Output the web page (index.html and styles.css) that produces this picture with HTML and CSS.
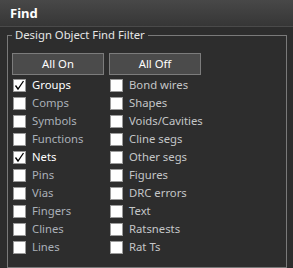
FILE: index.html
```html
<!DOCTYPE html>
<html>
<head>
<meta charset="utf-8">
<link rel="stylesheet" href="styles.css">
</head>
<body>
<div class="titlebar">Find</div>
<fieldset class="group">
  <legend class="legend">Design Object Find Filter</legend>
  <div class="buttons">
    <div class="btn">All On</div>
    <div class="btn">All Off</div>
  </div>
  <div class="grid">
    <div class="item on"><span class="box"><svg width="11" height="11" viewBox="0 0 11 11"><path d="M1.5 5.5 L4 9 L9.5 1" fill="none" stroke="#000" stroke-width="1.3"/></svg></span><span class="lbl">Groups</span></div>
    <div class="item"><span class="box"></span><span class="lbl">Comps</span></div>
    <div class="item"><span class="box"></span><span class="lbl">Symbols</span></div>
    <div class="item"><span class="box"></span><span class="lbl">Functions</span></div>
    <div class="item on"><span class="box"><svg width="11" height="11" viewBox="0 0 11 11"><path d="M1.5 5.5 L4 9 L9.5 1" fill="none" stroke="#000" stroke-width="1.3"/></svg></span><span class="lbl">Nets</span></div>
    <div class="item"><span class="box"></span><span class="lbl">Pins</span></div>
    <div class="item"><span class="box"></span><span class="lbl">Vias</span></div>
    <div class="item"><span class="box"></span><span class="lbl">Fingers</span></div>
    <div class="item"><span class="box"></span><span class="lbl">Clines</span></div>
    <div class="item"><span class="box"></span><span class="lbl">Lines</span></div>
    <div class="item r"><span class="box"></span><span class="lbl">Bond wires</span></div>
    <div class="item r"><span class="box"></span><span class="lbl">Shapes</span></div>
    <div class="item r"><span class="box"></span><span class="lbl">Voids/Cavities</span></div>
    <div class="item r"><span class="box"></span><span class="lbl">Cline segs</span></div>
    <div class="item r"><span class="box"></span><span class="lbl">Other segs</span></div>
    <div class="item r"><span class="box"></span><span class="lbl">Figures</span></div>
    <div class="item r"><span class="box"></span><span class="lbl">DRC errors</span></div>
    <div class="item r"><span class="box"></span><span class="lbl">Text</span></div>
    <div class="item r"><span class="box"></span><span class="lbl">Ratsnests</span></div>
    <div class="item r"><span class="box"></span><span class="lbl">Rat Ts</span></div>
  </div>
</fieldset>
<div class="next"></div>
</body>
</html>
```
FILE: styles.css
```css
html, body {
  margin: 0;
  padding: 0;
  background: #2d2d2d;
  font-family: "Noto Sans", "Open Sans", sans-serif;
  font-size: 11.3px;
  color: #c8c8c8;
  width: 293px;
  height: 268px;
  overflow: hidden;
}
.titlebar {
  height: 26px;
  line-height: 27px;
  padding-left: 10px;
  font-weight: bold;
  font-size: 13px;
  color: #ffffff;
  background: linear-gradient(#484848, #363636);
  border-bottom: 1px solid #4a4a4a;
}
.group {
  margin: 0 6px 0 7px;
  padding: 10px 4px 8px 4px;
  border: 1px solid #7a7a7a;
  min-width: 0;
}
.legend {
  padding: 0 3px;
  margin-left: 0;
  line-height: 16px;
  color: #e6e6e6;
}
.buttons {
  display: flex;
  gap: 5px;
}
.btn {
  width: 90px;
  height: 20px;
  line-height: 20px;
  text-align: center;
  color: #ffffff;
  background: #4b4b4b;
  border: 1px solid #7c7c7c;
}
.grid {
  margin-top: 4px;
  margin-left: 1px;
  display: grid;
  grid-template-columns: 97px 1fr;
  grid-template-rows: repeat(10, 18px);
  grid-auto-flow: column;
}
.item {
  display: flex;
  align-items: flex-start;
  gap: 6px;
  color: #aab0b8;
}
.item.r {
  color: #c4c6c8;
}
.item.on {
  color: #ffffff;
}
.box {
  width: 11px;
  height: 11px;
  background: #ffffff;
  border: 1px solid #9a9a9a;
  display: flex;
  flex: none;
}
.lbl {
  line-height: 14px;
  margin-top: -1px;
}
.next {
  margin: 0 6px 0 7px;
  height: 20px;
  border-left: 1px solid #7a7a7a;
  border-right: 1px solid #7a7a7a;
}
```
